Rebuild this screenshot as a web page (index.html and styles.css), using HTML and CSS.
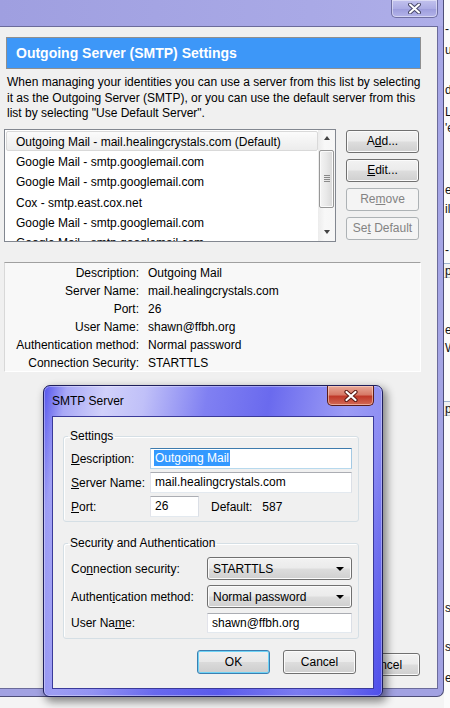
FILE: index.html
```html
<!DOCTYPE html>
<html>
<head>
<meta charset="utf-8">
<title>Outgoing Server (SMTP) Settings</title>
<link rel="stylesheet" href="styles.css">
</head>
<body>
<div class="stage">
  <div class="win">
    <div class="win-title">
      <div class="cap-close">
        <svg width="13" height="11" viewBox="0 0 13 11"><path d="M2 1.5L11 9.5M11 1.5L2 9.5" stroke="#4a4a6a" stroke-width="4" stroke-linecap="round"/><path d="M2 1.5L11 9.5M11 1.5L2 9.5" stroke="#fff" stroke-width="2" stroke-linecap="round"/></svg>
      </div>
    </div>
    <div class="client">
      <div class="banner">Outgoing Server (SMTP) Settings</div>
      <p class="intro">When managing your identities you can use a server from this list by selecting<br>it as the Outgoing Server (SMTP), or you can use the default server from this<br>list by selecting "Use Default Server".</p>
      <div class="list-row">
        <div class="listbox">
          <ul class="items">
            <li class="item sel">Outgoing Mail - mail.healingcrystals.com (Default)</li>
            <li class="item">Google Mail - smtp.googlemail.com</li>
            <li class="item">Google Mail - smtp.googlemail.com</li>
            <li class="item">Cox - smtp.east.cox.net</li>
            <li class="item">Google Mail - smtp.googlemail.com</li>
            <li class="item">Google Mail - smtp.googlemail.com</li>
          </ul>
          <div class="vscroll">
            <div class="sarrow"><span class="tri-up"></span></div>
            <div class="thumb"><span class="grip"></span><span class="grip"></span><span class="grip"></span><span class="grip"></span></div>
            <div class="sfill"></div>
            <div class="sarrow"><span class="tri-down"></span></div>
          </div>
        </div>
        <div class="side-buttons">
          <button class="btn">A<u>d</u>d...</button>
          <button class="btn"><u>E</u>dit...</button>
          <button class="btn dis">Re<u>m</u>ove</button>
          <button class="btn dis">Se<u>t</u> Default</button>
        </div>
      </div>
      <div class="details">
        <div class="dl">Description:</div><div class="dv">Outgoing Mail</div>
        <div class="dl">Server Name:</div><div class="dv">mail.healingcrystals.com</div>
        <div class="dl">Port:</div><div class="dv">26</div>
        <div class="dl">User Name:</div><div class="dv">shawn@ffbh.org</div>
        <div class="dl">Authentication method:</div><div class="dv">Normal password</div>
        <div class="dl">Connection Security:</div><div class="dv">STARTTLS</div>
      </div>
      <div class="win-foot">
        <button class="btn">Cancel</button>
      </div>
    </div>
  </div>
  <div class="bgwin">
    <div class="frag f1">-</div>
    <div class="frag f2">ui</div>
    <div class="frag f3">de</div>
    <div class="frag f4">La</div>
    <div class="frag f5">'e</div>
    <div class="frag f6">en</div>
    <div class="frag f7">il</div>
    <div class="frag f8">-</div>
    <div class="frag fbox f9">pe</div>
    <div class="frag f10">en</div>
    <div class="frag f11">W</div>
    <div class="frag fbox f12">pd</div>
    <div class="frag f13">s</div>
    <div class="frag f14">s</div>
    <div class="frag f15">e</div>
  </div>
</div>

<div class="dlg">
  <div class="dlg-title">
    <span class="dlg-caption">SMTP Server</span>
    <div class="dlg-close">
      <svg width="14" height="12" viewBox="0 0 14 12"><path d="M2.5 2L11.5 10M11.5 2L2.5 10" stroke="#5a1a14" stroke-width="4.2" stroke-linecap="round"/><path d="M2.5 2L11.5 10M11.5 2L2.5 10" stroke="#fff" stroke-width="2.2" stroke-linecap="round"/></svg>
    </div>
  </div>
  <div class="dlg-client">
    <fieldset class="group">
      <legend>Settings</legend>
      <div class="form g1">
        <label><u>D</u>escription:</label>
        <div class="tb focus"><span class="selt">Outgoing Mail</span></div>
        <label><u>S</u>erver Name:</label>
        <div class="tb">mail.healingcrystals.com</div>
        <label><u>P</u>ort:</label>
        <div class="port-row"><div class="tb port">26</div><span class="dflt">Default:</span><span class="dnum">587</span></div>
      </div>
    </fieldset>
    <fieldset class="group g2box">
      <legend>Security and Authentication</legend>
      <div class="form g2">
        <label>Co<u>n</u>nection security:</label>
        <div class="combo"><span>STARTTLS</span><span class="tri-down big"></span></div>
        <label>Authent<u>i</u>cation method:</label>
        <div class="combo"><span>Normal password</span><span class="tri-down big"></span></div>
        <label>User Na<u>m</u>e:</label>
        <div class="tb short">shawn@ffbh.org</div>
      </div>
    </fieldset>
    <div class="dlg-buttons">
      <button class="btn def">OK</button>
      <button class="btn">Cancel</button>
    </div>
  </div>
</div>
</body>
</html>
```
FILE: styles.css
```css
* { box-sizing: border-box; }
html, body { margin: 0; padding: 0; }
body {
  width: 450px; height: 708px; overflow: hidden; position: relative;
  background: #f4f4f4;
  font-family: "Liberation Sans", Arial, sans-serif; font-size: 12px; color: #000;
}
u { text-decoration: underline; text-underline-offset: 1px; }
.stage { display: flex; align-items: flex-start; height: 708px; }

/* ---------- outer window ---------- */
.win {
  flex: none; width: 444px; height: 697px;
  display: flex; flex-direction: column;
  padding: 0 5px 7px 0;
  background: linear-gradient(180deg, #a3a3e4 0px, #a7a7e6 26px, #a2a2e2 100%);
  border: 1px solid #4e4e78; border-left: none; border-top: none;
  border-bottom-right-radius: 7px;
}
.win-title { height: 26px; flex: none; display: flex; justify-content: flex-end; align-items: flex-start;
  background: linear-gradient(90deg, #9f9fe0, #a9a9e6 70%, #aeaee8); margin-right: -5px; padding-right: 5px; }
.cap-close {
  width: 47px; height: 18px; display: flex; align-items: center; justify-content: center;
  border: 1px solid #6f6fa2; border-top: none; border-radius: 0 0 5px 5px;
  background: linear-gradient(180deg, #c2c2ee, #acacE4 50%, #9c9cdc 51%, #b4b4ea);
  box-shadow: inset 0 0 0 1px rgba(255,255,255,.45);
}
.client {
  flex: 1; display: flex; flex-direction: column;
  background: #f0f0f0; border: 1px solid #6b6b9a; border-left: none;
}
.banner {
  margin: 10px 16px 0 6px; height: 32px; flex: none;
  background: #3d97f8; border: 1px solid #8f8f8f;
  color: #fff; font-weight: bold; font-size: 14px; line-height: 30px; padding-left: 9px;
  white-space: nowrap;
}
.intro { margin: 6px 0 0 7px; line-height: 15.5px; white-space: nowrap; color: #000; }
.list-row { display: flex; gap: 10px; margin-top: 7px; padding-left: 4px; }
.listbox {
  width: 332px; height: 113px; display: flex; background: #fff;
  border: 1px solid #828790;
}
.items { list-style: none; margin: 0; padding: 1px 0 0 1px; flex: 1; overflow: hidden; }
.item { height: 20.4px; line-height: 20px; padding-left: 9px; white-space: nowrap; border: 1px solid transparent; }
.item.sel { border-color: #d9d9d9; border-radius: 2px; background: linear-gradient(180deg, #fbfbfb, #ececec); }
.vscroll { width: 17px; flex: none; display: flex; flex-direction: column;
  background: linear-gradient(90deg, #ececec, #f8f8f8 40%, #f6f6f6); }
.sarrow { height: 17px; display: flex; align-items: center; justify-content: center; }
.tri-up { width: 0; height: 0; border-left: 3.5px solid transparent; border-right: 3.5px solid transparent; border-bottom: 4px solid #444; }
.tri-down { width: 0; height: 0; border-left: 3.5px solid transparent; border-right: 3.5px solid transparent; border-top: 4px solid #444; }
.tri-down.big { border-left-width: 4px; border-right-width: 4px; border-top-width: 4px; border-top-color: #000; }
.thumb {
  height: 58px; margin: 3px 1px 0 1px; border: 1px solid #979797; border-radius: 2px;
  background: linear-gradient(90deg, #f4f4f4, #e8e8e8 50%, #d8d8d8);
  display: flex; flex-direction: column; justify-content: center; align-items: center; gap: 1px;
  box-shadow: inset 0 0 0 1px #fafafa;
}
.grip { width: 6px; height: 1px; background: #8a8a8a; }
.sfill { flex: 1; }

.side-buttons { display: flex; flex-direction: column; gap: 6px; padding-top: 1px; }
.btn {
  width: 73px; height: 23px; padding: 0; margin: 0;
  font-family: inherit; font-size: 12px; color: #000;
  border: 1px solid #707070; border-radius: 3px;
  background: linear-gradient(180deg, #f2f2f2 0%, #ebebeb 48%, #dddddd 52%, #cfcfcf 100%);
  box-shadow: inset 0 0 0 1px #fbfbfb;
}
.btn.dis { color: #838383; border-color: #adb2b5; background: #f4f4f4; box-shadow: none; }
.btn.def { border-color: #3c7fb1; box-shadow: inset 0 0 0 1px #6fd3f6;
  background: linear-gradient(180deg, #f0f0f0 0%, #e8e8e8 48%, #dadada 52%, #cdcdcd 100%); }

.details {
  margin: 20px 0 0 4px; width: 417px; height: 110px; flex: none;
  background: #f8f8f8;
  border-top: 1px solid #a0a0a0; border-left: 1px solid #d8d8d8;
  border-right: 1px solid #ffffff; border-bottom: 1px solid #ffffff;
  display: grid; grid-template-columns: 134px 1fr; column-gap: 9px;
  grid-auto-rows: 18.2px; padding-top: 1px; line-height: 18px;
}
.dl { text-align: right; white-space: nowrap; }
.dv { white-space: nowrap; }
.win-foot { margin-top: auto; display: flex; justify-content: flex-end; padding: 0 17px 12px 0; }

/* ---------- background window strip ---------- */
.bgwin { flex: 1; height: 708px; background: #fbfbfb; overflow: hidden; display: flex; flex-direction: column; }
.frag { height: 14px; line-height: 14px; white-space: nowrap; padding-left: 1px; color: #111; }
.fbox { height: 15px; border-top: 1px solid #9fb4cf; border-bottom: 1px solid #c8c8c8; background: #f2f2f2; }
.f1 { margin-top: 22px; } .f2 { margin-top: 7px; } .f3 { margin-top: 26px; } .f4 { margin-top: 8px; }
.f5 { margin-top: 2px; } .f6 { margin-top: 48px; } .f7 { margin-top: 5px; } .f8 { margin-top: 27px; }
.f9 { margin-top: 6px; } .f10 { margin-top: 45px; } .f11 { margin-top: 4px; } .f12 { margin-top: 46px; }
.f13 { margin-top: 185px; } .f14 { margin-top: 25px; } .f15 { margin-top: 17px; }

/* ---------- SMTP Server dialog (window over the other one) ---------- */
.dlg {
  position: absolute; left: 43px; top: 385px; width: 340px; height: 312px;
  display: flex; flex-direction: column; padding: 0 8px 7px 8px;
  border: 1px solid #1e1e5c; border-radius: 7px 7px 6px 6px;
  background:
    linear-gradient(180deg, rgba(255,255,255,0) 0px, rgba(255,255,255,0) 30px, rgba(60,60,230,.35) 100%),
    linear-gradient(100deg, #5454ec 0%, #a9a9f6 6%, #d0d0fa 16%, #c0c0f8 26%, #8080f2 42%, #6a6aee 58%, #9c9cf5 78%, #8e8ef3 88%, #5858ec 100%);
  box-shadow: 3px 4px 9px 1px rgba(0,0,0,.45), inset 0 0 0 1px rgba(255,255,255,.35);
}
.dlg-title { height: 30px; flex: none; display: flex; justify-content: space-between; align-items: flex-start; }
.dlg-caption { padding-top: 8px; line-height: 15px; font-size: 12px; color: #000; }
.dlg-close {
  width: 47px; height: 20px; display: flex; align-items: center; justify-content: center;
  border: 1px solid #5a1c18; border-top: none; border-radius: 0 0 5px 5px;
  background: linear-gradient(180deg, #e8a898 0%, #d77a68 45%, #c0392a 55%, #d26a55 100%);
  box-shadow: inset 0 0 0 1px rgba(255,220,210,.55);
}
.dlg-client {
  flex: 1; display: flex; flex-direction: column;
  background: #f0f0f0; border: 1px solid #3a3a9a;
}
.group {
  margin: 12px 14px 0 10px; padding: 4px 6px 4px 7px;
  border: 1px solid #d5dfe5; border-radius: 3px; min-width: 0;
  box-shadow: inset 1px 1px 0 #fff;
}
.group legend { padding: 0 2px; margin-left: -3px; line-height: 15px; font-size: 12px; }
.g2box { margin-top: 14px; padding-top: 6px; padding-bottom: 5px; }
.form { display: grid; align-items: center; }
.g1 { grid-template-columns: 79px 1fr; row-gap: 3px; grid-auto-rows: 21px; }
.g2 { grid-template-columns: 136px 1fr; row-gap: 5px; grid-template-rows: 23px 23px 20px; }
.form label { white-space: nowrap; }
.tb {
  height: 21px; line-height: 19px; padding: 0 4px; background: #fff; white-space: nowrap; overflow: hidden;
  border: 1px solid; border-color: #abadb3 #dbdfe6 #e3e9ef #e2e3ea;
}
.tb.short { height: 20px; line-height: 18px; }
.tb.focus { border-color: #3d7bad #a4c9e3 #b7d9ed #b5cfe7; padding-left: 3px; }
.selt { background: #3399ff; color: #fff; padding: 1px 1px; }
.port-row { display: flex; align-items: center; }
.tb.port { width: 49px; }
.dflt { margin-left: 12px; }
.dnum { margin-left: 10px; }
.combo {
  height: 23px; display: flex; align-items: center; justify-content: space-between;
  padding: 0 7px 0 5px;
  border: 1px solid #707070; border-radius: 3px;
  background: linear-gradient(180deg, #f2f2f2 0%, #ebebeb 48%, #dddddd 52%, #cfcfcf 100%);
  box-shadow: inset 0 0 0 1px #fbfbfb;
}
.dlg-buttons { display: flex; justify-content: flex-end; gap: 13px; margin: 11px 17px 0 0; }
.dlg-buttons .btn { height: 24px; }
```
